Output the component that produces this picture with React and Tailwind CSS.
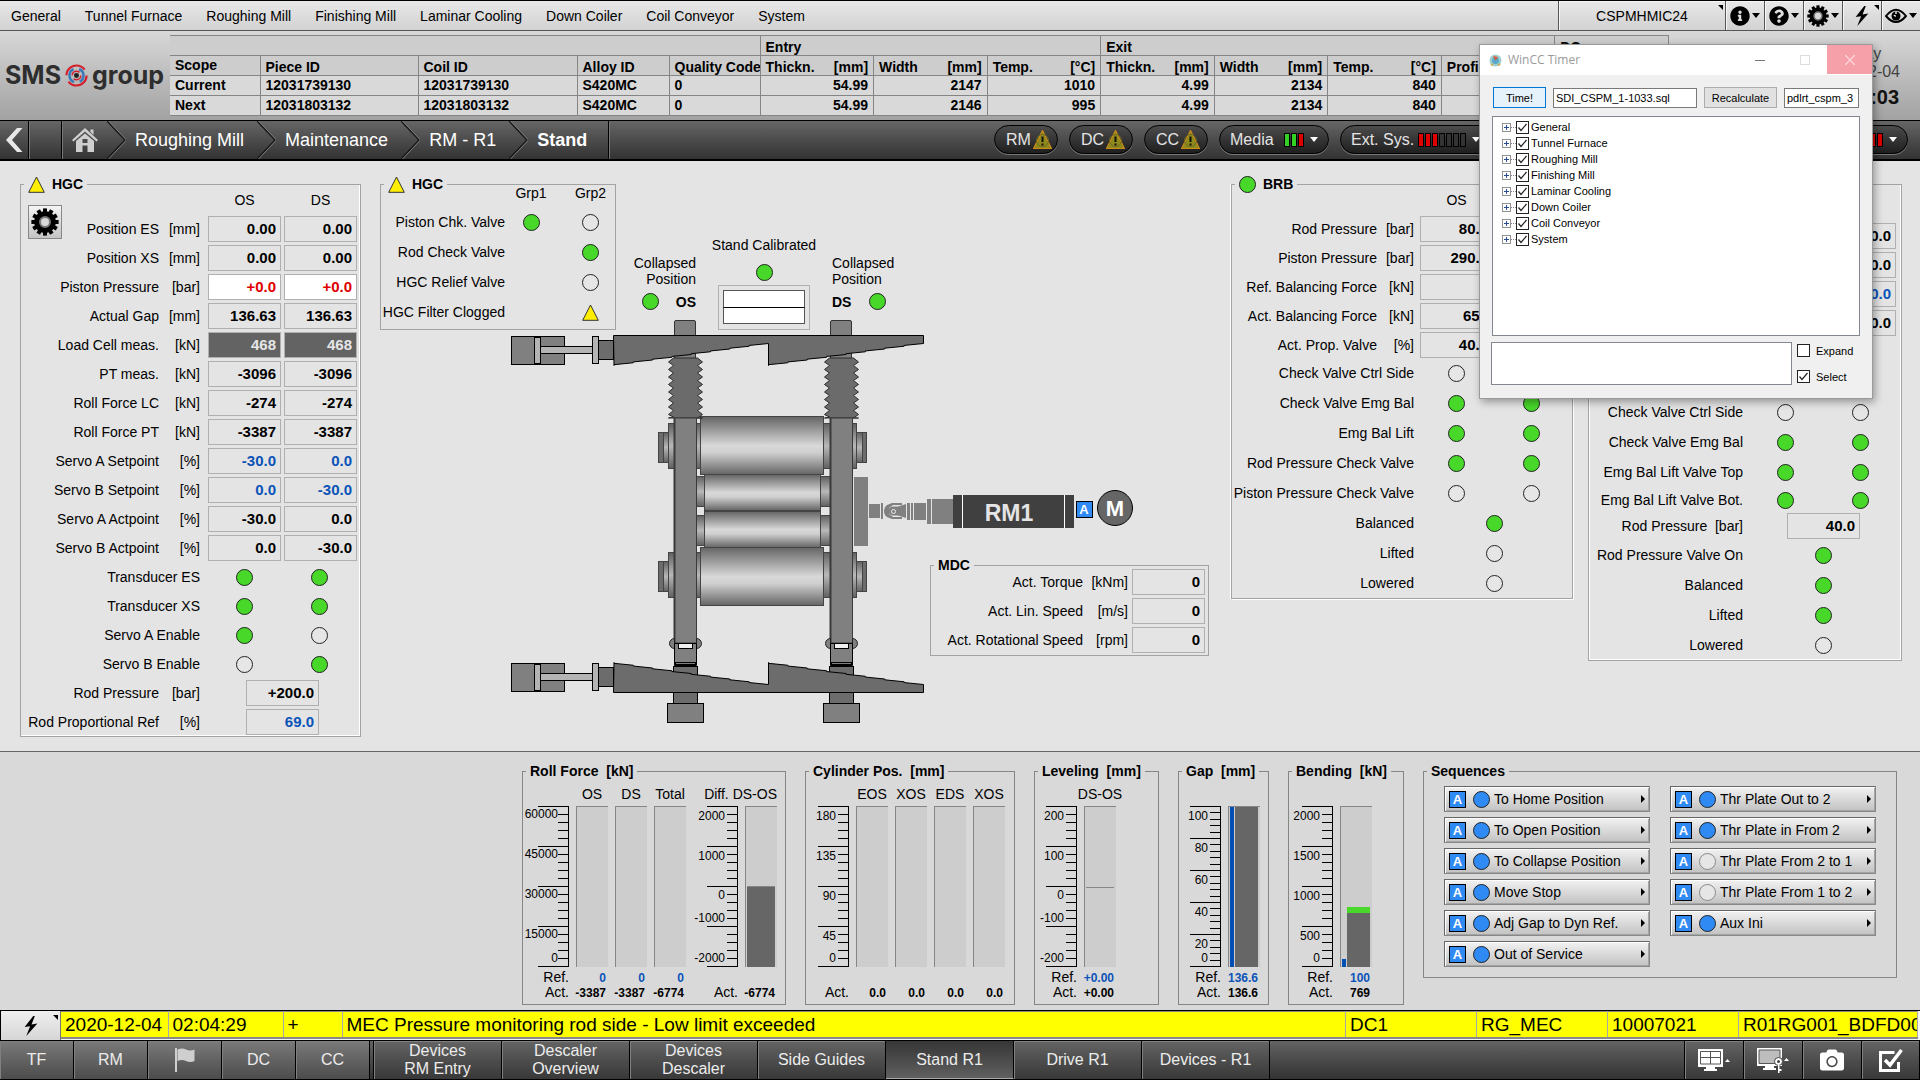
import React from "react";
import { FaInfoCircle, FaQuestionCircle, FaCamera } from "react-icons/fa";

/* ---------- shared bits ---------- */

function Led({ on = false, color = "green" }) {
  const fill = on ? (color === "blue" ? "bg-[#2f8af3]" : "bg-[#48d82a]") : "bg-[#e6e6e6]";
  const edge = !on && color === "blue" ? "border-[#888]" : "border-[#222]";
  return <span className={`inline-block size-[17px] shrink-0 rounded-full border ${edge} ${fill}`} />;
}

function WarnTriangle() {
  return (
    <svg width="17" height="17" viewBox="0 0 17 17" className="shrink-0">
      <path d="M8.5 1 L16.3 16.3 H.7 Z" fill="#ffee00" stroke="#333" strokeWidth="1" />
    </svg>
  );
}

function Bolt({ size = 22 }) {
  return (
    <svg width={size} height={size} viewBox="0 0 22 22">
      <path d="M13.5 0 L4 12.2 L10 11.2 L5.8 22 L18 8.3 L11.6 9.3 L15.2 0 Z" fill="#000" />
    </svg>
  );
}

function Gear({ size, hole }) {
  const teeth = Array.from({ length: 12 }, (_, i) => i * 30);
  return (
    <svg width={size} height={size} viewBox="-14 -14 28 28">
      {teeth.map((a) => (
        <rect key={a} x="-2" y="-13.6" width="4" height="5" fill="#000" transform={`rotate(${a})`} />
      ))}
      <circle r="10.8" fill="#000" />
      <circle r={hole} fill="#d8d8d8" stroke="#777" strokeWidth="2" />
    </svg>
  );
}

function Caret() {
  return <span className="h-0 w-0 border-x-4 border-t-[5px] border-x-transparent border-t-black" />;
}

function AutoBadge() {
  return (
    <span className="flex size-[17px] shrink-0 items-center justify-center border border-black bg-[#2f8af3] text-[13px] leading-none font-bold text-white">
      A
    </span>
  );
}

function Panel({ title, icon, className = "", children, strong = false }) {
  return (
    <fieldset
      className={`relative min-w-0 border ${strong ? "border-[#868686]" : "border-[#a3a3a3]"} ${className}`}
    >
      <legend className="ml-[3px] flex h-5 items-center gap-[7px] px-1 text-sm font-bold whitespace-pre">
        {icon}
        {title}
      </legend>
      {children}
    </fieldset>
  );
}

const tones = {
  normal: "text-black",
  blue: "text-[#0a53b8]",
  red: "bg-white text-[#e00000]",
  dark: "bg-[#636363] text-[#e6e6e6]",
};

function Value({ children, tone = "normal" }) {
  return (
    <output
      className={`flex h-[26px] w-[73px] shrink-0 items-center justify-end border border-[#b0b0b0] pr-1 text-[15px] font-bold ${tones[tone]}`}
    >
      {children}
    </output>
  );
}

/* ---------- top of the page ---------- */

const menu = ["General", "Tunnel Furnace", "Roughing Mill", "Finishing Mill", "Laminar Cooling", "Down Coiler", "Coil Conveyor", "System"];

function Corner() {
  return <span className="absolute top-1 right-0.5 h-0 w-0 border-t-[5px] border-l-[5px] border-t-black border-l-transparent" />;
}

function TopMenu() {
  const cell = "relative flex w-[39px] items-center justify-center gap-0.5 border-l border-[#555] shadow-[inset_1px_1px_0_#f6f6f6]";
  return (
    <header className="flex h-[31px] items-stretch border-t border-b border-t-black border-b-[#555] bg-linear-to-b from-[#e8e8e8] to-[#d2d2d2]">
      <nav className="flex flex-1 items-center gap-6 pl-[11px] text-sm">
        {menu.map((m) => (
          <a href="#" key={m}>{m}</a>
        ))}
      </nav>
      <button className="relative w-[167px] border-l border-[#555] text-center text-sm shadow-[inset_1px_1px_0_#f6f6f6]">
        CSPMHMIC24
        <Corner />
      </button>
      <button aria-label="Information" className={cell}><FaInfoCircle size={20} /><Caret /></button>
      <button aria-label="Help" className={cell}><FaQuestionCircle size={20} /><Caret /></button>
      <button aria-label="Settings" className={cell}><Gear size={22} hole={5} /><Caret /></button>
      <button aria-label="Alarms" className={cell}><Bolt size={20} /><Corner /></button>
      <button aria-label="View" className={cell}>
        <svg width="22" height="16" viewBox="0 0 22 16" fill="none" stroke="#000" strokeWidth="2">
          <path d="M1 8 Q11 -4.500 21 8 Q11 20 1 8 Z" />
          <circle cx="11" cy="8" r="4.500" fill="#000" stroke="none" />
          <path d="M11 6 V3.500 M11 8 A2 2 0 0 1 9 7" stroke="#e8e8e8" strokeWidth="1.500" />
        </svg>
        <Caret />
      </button>
    </header>
  );
}

function Logo() {
  return (
    <div className="flex w-[170px] shrink-0 items-center gap-1 pl-[5px] font-[Inter,sans-serif] text-[25px] font-bold text-[#2e2e2e]">
      SMS
      <svg width="23" height="23" viewBox="0 0 24 24" fill="none">
        <circle cx="12" cy="12" r="10.500" stroke="#d3202c" strokeWidth="2.200" strokeDasharray="26 7" />
        <circle cx="12" cy="12" r="7.300" stroke="#3a78b8" strokeWidth="2.600" strokeDasharray="17 6" strokeDashoffset="9" />
        <circle cx="12" cy="12" r="4.500" stroke="#d3202c" strokeWidth="1.600" strokeDasharray="10 4" />
        <circle cx="12" cy="12" r="2.600" fill="#222" />
      </svg>
      group
    </div>
  );
}

const heads = [
  ["Thickn.", "[mm]"], ["Width", "[mm]"], ["Temp.", "[°C]"],
  ["Thickn.", "[mm]"], ["Width", "[mm]"], ["Temp.", "[°C]"],
  ["Profile", ""], ["", ""],
];
const pieces = [
  ["Current", "12031739130", "12031739130", "S420MC", "0", "54.99", "2147", "1010", "4.99", "2134", "840", "", ""],
  ["Next", "12031803132", "12031803132", "S420MC", "0", "54.99", "2146", "995", "4.99", "2134", "840", "", ""],
];

function PieceTable() {
  const line = "border border-[#858585] px-[5px] py-0 overflow-hidden whitespace-nowrap";
  const head = `${line} align-bottom leading-4`;
  return (
    <table className="mt-1 w-full table-fixed border-collapse text-left text-sm leading-[19px] font-bold">
      <colgroup>
        <col className="w-[90px]" /><col className="w-[158px]" /><col className="w-[159px]" />
        <col className="w-[92px]" /><col className="w-[91px]" />
        {heads.map((_, i) => <col key={i} />)}
      </colgroup>
      <thead className="bg-[#cdcdcd]">
        <tr className="h-5">
          <th colSpan={5} className={`${line} border-l-0`} />
          <th colSpan={3} className={head}>Entry</th>
          <th colSpan={4} className={head}>Exit</th>
          <th className={head}>DC</th>
        </tr>
        <tr className="h-5">
          <th className={`${line} border-l-0`}>Scope</th>
          {["Piece ID", "Coil ID", "Alloy ID", "Quality Code"].map((h) => (
            <th key={h} className={head}>{h}</th>
          ))}
          {heads.map(([a, b], i) => (
            <th key={i} className={head}><span className="flex justify-between"><span>{a}</span><span>{b}</span></span></th>
          ))}
        </tr>
      </thead>
      <tbody className="bg-[#d9d9d9]">
        {pieces.map((r) => (
          <tr key={r[0]} className="h-5">
            {r.map((c, i) => (
              <td key={i} className={`${line} ${i === 0 ? "border-l-0" : ""} ${i > 4 ? "text-right" : ""}`}>{c}</td>
            ))}
          </tr>
        ))}
      </tbody>
    </table>
  );
}

function InfoBand() {
  return (
    <div className="flex h-[89px] items-start bg-linear-to-b from-[#d8d8d8] to-[#a2a2a2]">
      <div className="flex h-full items-center"><Logo /></div>
      <div className="min-w-0 flex-1"><PieceTable /></div>
      <div className="flex w-[251px] shrink-0 justify-end pt-3.5 pr-5">
        <div className="flex flex-col items-center text-base leading-[18px] text-[#444]">
          <span>Friday</span>
          <span>2020-12-04</span>
          <time className="mt-1 text-xl leading-6 font-bold text-[#111]">02:05:03</time>
        </div>
      </div>
    </div>
  );
}

function Chevron() {
  return (
    <svg width="19" height="38" viewBox="0 0 19 38" fill="none" className="shrink-0">
      <path d="M0 0 L18 19 L0 38" stroke="#161616" strokeWidth="1.500" />
      <path d="M1.500 0 L19.500 19 L1.500 38" stroke="#7d7d7d" strokeWidth="1" />
    </svg>
  );
}

const pill = "flex h-[29px] items-center rounded-full border border-black bg-linear-to-b from-[#4c4c4c] to-[#1f1f1f] text-base text-[#e4e4e4] shadow-[0_1px_0_#777]";

function PillWarn({ children }) {
  return (
    <button className={`${pill} w-16 pl-[11px]`}>
      {children}
      <svg width="19" height="19" viewBox="0 0 19 19" className="ml-0.5">
        <path d="M9.500 .500 L18.500 18.500 H.500 Z" fill="#8f8a1c" stroke="#c98a1a" strokeWidth="1.200" />
        <circle cx="9.500" cy="10.500" r="6" fill="none" stroke="#6b6722" strokeWidth="1" />
        <path d="M9.500 6.500 V12 M9.500 13.500 V15.500" stroke="#111" strokeWidth="2" />
      </svg>
    </button>
  );
}

function Lamps({ colors }) {
  const c = { g: "bg-[#35d025]", r: "bg-[#e00000]", n: "bg-[#333]" };
  return (
    <span className="ml-1 flex gap-px">
      {colors.split("").map((k, i) => (
        <span key={i} className={`h-3.5 w-[6px] border border-black ${c[k]}`} />
      ))}
    </span>
  );
}

function WhiteCaret() {
  return <span className="ml-1.5 h-0 w-0 border-x-4 border-t-[5px] border-x-transparent border-t-white" />;
}

function PathBar() {
  return (
    <nav className="flex h-[41px] items-stretch border-t border-b-2 border-black bg-linear-to-b from-[#666] to-[#333] text-lg text-white">
      <button aria-label="Back" className="flex w-[29px] items-center justify-center border-r border-black">
        <svg width="20" height="26" viewBox="0 0 20 26"><path d="M13 1 H18.500 L8 13 L18.500 25 H13 L2 13 Z" fill="#e8e8e8" /></svg>
      </button>
      <span className="w-[33px] border-r border-black shadow-[inset_1px_0_0_#777]" />
      <button aria-label="Home" className="flex w-[45px] items-center justify-center shadow-[inset_1px_0_0_#777]">
        <svg width="26" height="24" viewBox="0 0 26 24">
          <path d="M13 0 L26 12 L24.500 13.500 L13 3.500 L1.500 13.500 L0 12 Z M18.500 1.500 H21.500 V7 L18.500 4 Z M4 13 L13 5.500 L22 13 V24 H15.500 V17.500 H10.500 V24 H4 Z" fill="#cfcfcf" />
          <rect x="10.500" y="11" width="5" height="4" fill="#4a4a4a" />
        </svg>
      </button>
      {["Roughing Mill", "Maintenance", "RM - R1"].map((t) => (
        <React.Fragment key={t}>
          <Chevron />
          <a href="#" className="flex items-center pr-[13px] pl-[9px] whitespace-nowrap">{t}</a>
        </React.Fragment>
      ))}
      <Chevron />
      <a href="#" className="flex items-center border-r border-black pr-[21px] pl-[9px] font-bold">Stand</a>
      <div className="flex flex-1 items-start justify-end gap-[11px] pt-1 pr-3 shadow-[inset_1px_0_0_#777]">
        <PillWarn>RM</PillWarn>
        <PillWarn>DC</PillWarn>
        <PillWarn>CC</PillWarn>
        <button className={`${pill} w-[110px] pl-2.5`}>Media<span className="ml-1.5"><Lamps colors="ggr" /></span><WhiteCaret /></button>
        <button className={`${pill} w-[160px] pl-2.5`}>Ext. Sys.<Lamps colors="rrrnnnn" /><WhiteCaret /></button>
        <button aria-label="Status" className={`${pill} w-[397px] justify-end pr-2.5`}><Lamps colors="rrrr" /><WhiteCaret /></button>
      </div>
    </nav>
  );
}

/* ---------- left HGC panel ---------- */

const hgcRows = [
  ["Position ES", "[mm]", "0.00", "0.00"],
  ["Position XS", "[mm]", "0.00", "0.00"],
  ["Piston Pressure", "[bar]", "+0.0", "+0.0", "red"],
  ["Actual Gap", "[mm]", "136.63", "136.63"],
  ["Load Cell meas.", "[kN]", "468", "468", "dark"],
  ["PT meas.", "[kN]", "-3096", "-3096"],
  ["Roll Force LC", "[kN]", "-274", "-274"],
  ["Roll Force PT", "[kN]", "-3387", "-3387"],
  ["Servo A Setpoint", "[%]", "-30.0", "0.0", "blue"],
  ["Servo B Setpoint", "[%]", "0.0", "-30.0", "blue"],
  ["Servo A Actpoint", "[%]", "-30.0", "0.0"],
  ["Servo B Actpoint", "[%]", "0.0", "-30.0"],
];
const hgcLeds = [
  ["Transducer ES", true, true],
  ["Transducer XS", true, true],
  ["Servo A Enable", true, false],
  ["Servo B Enable", false, true],
];

function SideHeads() {
  return (
    <div className="-mt-0.5 flex h-[21px] justify-end gap-[3px] pr-[3px] text-center leading-4">
      <span className="w-[73px]">OS</span><span className="w-[73px]">DS</span>
    </div>
  );
}

function HgcPanel() {
  const row = "flex h-[26px] items-center pr-[3px]";
  return (
    <Panel title="HGC" icon={<WarnTriangle />} className="w-[341px] shrink-0 self-start pb-px shadow-[inset_-1px_-1px_0_#fff]">
      <div className="flex flex-col gap-[3px]">
        <SideHeads />
        {hgcRows.map(([l, u, a, b, tone]) => (
          <div key={l} className={row}>
            <span className="flex-1 text-right">{l}</span>
            <span className="mr-2 w-[41px] text-right">{u}</span>
            <Value tone={tone}>{a}</Value>
            <span className="w-[3px]" />
            <Value tone={tone}>{b}</Value>
          </div>
        ))}
        {hgcLeds.map(([l, a, b]) => (
          <div key={l} className={row}>
            <span className="mr-2 flex-1 text-right">{l}</span>
            <span className="flex w-[73px] justify-center"><Led on={a} /></span>
            <span className="flex w-[76px] justify-center"><Led on={b} /></span>
          </div>
        ))}
        {[["Rod Pressure", "[bar]", "+200.0"], ["Rod Proportional Ref", "[%]", "69.0", "blue"]].map(([l, u, v, tone]) => (
          <div key={l} className={row}>
            <span className="flex-1 text-right">{l}</span>
            <span className="mr-2 w-[41px] text-right">{u}</span>
            <span className="flex w-[149px] justify-center"><Value tone={tone}>{v}</Value></span>
          </div>
        ))}
      </div>
      <button aria-label="HGC settings" className="absolute top-[11px] left-[7px] flex size-[34px] items-center justify-center border border-[#888] bg-linear-to-b from-[#f4f4f4] to-[#c4c4c4]">
        <Gear size={28} hole={5} />
      </button>
    </Panel>
  );
}

/* ---------- centre ---------- */

const valveRows = [
  ["Piston Chk. Valve", <Led on />, <Led />],
  ["Rod Check Valve", null, <Led on />],
  ["HGC Relief Valve", null, <Led />],
  ["HGC Filter Clogged", null, <WarnTriangle />],
];

function ValvePanel() {
  return (
    <Panel title="HGC" icon={<WarnTriangle />} className="w-[236px] shrink-0 pb-0.5">
      <div className="-mt-[11px] mb-1 flex h-5 items-center justify-end text-center">
        <span className="w-[52px]">Grp1</span><span className="ml-[9px] w-[49px]">Grp2</span>
      </div>
      {valveRows.map(([l, a, b]) => (
        <div key={l} className="flex h-[30px] items-center whitespace-nowrap">
          <span className="w-[124px] shrink-0 text-right">{l}</span>
          <span className="flex w-[52px] shrink-0 justify-center">{a}</span>
          <span className="ml-[9px] flex w-[49px] shrink-0 justify-center">{b}</span>
        </div>
      ))}
    </Panel>
  );
}

function stair(x0, x1, y0, y1) {
  const n = 8;
  const dx = (x1 - x0) / n;
  const dy = (y1 - y0) / n;
  let d = "";
  for (let i = 0; i < n; i++) {
    const x = x0 + dx * (i + 1);
    const y = y0 + dy * (i + 1);
    d += ` L${x} ${y - dy * 0.3} L${x} ${y}`;
  }
  return d;
}

const wedge = `M613.500 335.500 H923.500 V343.500${stair(923.5, 768.5, 343.5, 365.5)} V343.500${stair(768.5, 614, 343.5, 365.5)} Z`;

function Cylinder({ y }) {
  return (
    <g stroke="#000" strokeWidth="1">
      <rect x="511.500" y={y + 0.5} width="53" height="28" fill="#808080" />
      <rect x="540.500" y={y + 10.5} width="52" height="7" fill="#b4b4b4" />
      <rect x="534.500" y={y + 1.5} width="6" height="26" fill="#b4b4b4" />
      <rect x="592.500" y={y + 0.5} width="6" height="27" fill="#b4b4b4" />
      <rect x="598.500" y={y + 4.5} width="15" height="19" fill="#6c6c6c" />
    </g>
  );
}

function Bellows({ x }) {
  let left = "";
  let right = "";
  for (let i = 0; i < 8; i++) {
    const y = 358 + i * 7.5;
    left = ` L${x} ${y + 4} L${x + 5} ${y}` + left;
    right += ` L${x + 34} ${y + 4} L${x + 29} ${y + 7.5}`;
  }
  return <path d={`M${x + 5} 358 H${x + 29}${right} L${x + 34} 418 H${x} L${x + 5} 417${left} Z`} fill="#6b6b6b" stroke="#2c2c2c" />;
}

function Post({ x }) {
  return (
    <g>
      <rect x={x} y="418" width="22" height="225" fill="#808080" stroke="#3a3a3a" />
      <rect x={x - 1} y="418" width="2" height="225" fill="#3a3a3a" />
      <path d={`M${x} 638.500 a5 5 0 0 0 0 10 Z M${x + 22} 638.500 a5 5 0 0 1 0 10 Z`} fill="#808080" stroke="#222" />
      <path d={`M${x} 643.500 H${x + 4} V648.500 H${x + 18} V643.500 H${x + 22} V665.500 H${x} Z`} fill="#808080" stroke="#000" />
      <rect x={x + 4} y="643.500" width="14" height="5" fill="#f0f0f0" stroke="#000" />
      <rect x={x + 1} y="662.500" width="20" height="2" fill="#808080" stroke="#000" />
      <rect x={x - 1} y="666.500" width="24" height="37" fill="#6c6c6c" stroke="#000" />
      <rect x={x - 7} y="703.500" width="36" height="19" fill="#808080" stroke="#000" />
    </g>
  );
}

function BackupNeck({ y }) {
  const s = { fill: "url(#neck)", stroke: "#444" };
  return (
    <g>
      <rect x="658.500" y={y + 9} width="5" height="30" fill="#6c6c6c" stroke="#444" />
      <rect x="663.500" y={y + 9} width="5" height="30" {...s} />
      <rect x="668.500" y={y} width="6" height="45" {...s} />
      <rect x="696.500" y={y} width="4" height="45" {...s} />
      <rect x="823.500" y={y} width="7" height="45" {...s} />
      <rect x="851.500" y={y} width="5" height="45" {...s} />
      <rect x="856.500" y={y + 9} width="6" height="30" {...s} />
      <rect x="862.500" y={y + 9} width="4" height="30" fill="#6c6c6c" stroke="#444" />
    </g>
  );
}

function StandDrawing() {
  const roll = { fill: "url(#roll)", stroke: "#444" };
  return (
    <svg width="342" height="406" viewBox="511 320 342 406" className="shrink-0 overflow-visible" aria-label="Roughing stand R1">
      <defs>
        <linearGradient id="roll" x1="0" y1="0" x2="0" y2="1">
          <stop offset="0" stopColor="#656565" />
          <stop offset=".5" stopColor="#d8d8d8" />
          <stop offset=".62" stopColor="#d0d0d0" />
          <stop offset="1" stopColor="#656565" />
        </linearGradient>
        <linearGradient id="neck" x1="0" y1="0" x2="0" y2="1">
          <stop offset="0" stopColor="#606060" />
          <stop offset=".5" stopColor="#b8b8b8" />
          <stop offset="1" stopColor="#606060" />
        </linearGradient>
      </defs>
      <BackupNeck y={423.5} />
      <BackupNeck y={552.5} />
      {[476.5, 515.5].map((y) => (
        <g key={y}>
          <rect x="696.500" y={y} width="8" height="30" fill="url(#neck)" stroke="#444" />
          <rect x="820.500" y={y} width="10" height="30" fill="url(#neck)" stroke="#444" />
        </g>
      ))}
      <rect x="704.500" y="474.500" width="116" height="36" {...roll} />
      <rect x="704.500" y="511.500" width="116" height="36" {...roll} />
      <rect x="700.500" y="416.500" width="123" height="58" {...roll} />
      <rect x="700.500" y="547.500" width="123" height="58" {...roll} />
      {[674.5, 830.5].map((x) => (
        <g key={x}>
          <rect x={x} y="320.500" width="21" height="40" rx="1.500" fill="#808080" stroke="#333" />
          <Bellows x={x - 6} />
          <Post x={x} />
        </g>
      ))}
      <path d={wedge} fill="#6c6c6c" stroke="#000" />
      <path d={wedge} fill="#6c6c6c" stroke="#000" transform="translate(0 1028) scale(1 -1)" />
      <Cylinder y={336} />
      <Cylinder y={663} />
    </svg>
  );
}

function DriveDrawing() {
  return (
    <svg width="282" height="72" viewBox="853 475 282 72" className="shrink-0" aria-label="Main drive RM1">
      <g fill="#808080">
        <rect x="854" y="477" width="14" height="69" />
        <rect x="869" y="504" width="11" height="14" />
        <rect x="881" y="503" width="2" height="16" />
        <path d="M892 503 H902 V505 H893 L889 508 V514 L893 517 H902 V519 H892 L887 517 Q884 515 884 511 Q884 507 887 505 Z" />
        <path d="M893 506.500 H898 L906 504 V518 L898 515.500 H893 A4.500 4.500 0 0 1 893 506.500 Z" />
        <rect x="907" y="503" width="3" height="17" />
        <rect x="911" y="503" width="2" height="17" />
        <rect x="914" y="503" width="12" height="17" />
        <rect x="927" y="499" width="4" height="25" />
        <rect x="932" y="499" width="22" height="25" />
      </g>
      <circle cx="893.500" cy="511.500" r="2" fill="none" stroke="#eee" />
      <rect x="953" y="495" width="121" height="33" fill="#404040" />
      <path d="M962.500 495 V528 M1064.500 495 V528" stroke="#fff" />
      <text x="1009" y="521" textAnchor="middle" fontSize="23" fontWeight="700" fill="#e4e4e4">RM1</text>
      <rect x="1076.500" y="501.500" width="16" height="16" fill="#2f8af3" stroke="#000" />
      <text x="1084" y="514" textAnchor="middle" fontSize="13" fontWeight="700" fill="#fff">A</text>
      <circle cx="1115" cy="508" r="17.500" fill="#666" stroke="#000" />
      <text x="1115" y="516" textAnchor="middle" fontSize="22" fontWeight="700" fill="#fff">M</text>
    </svg>
  );
}

function MdcPanel() {
  return (
    <Panel title="MDC" className="mt-2 ml-[77px] w-[279px] pb-0.5">
      <div className="-mt-1.5 flex flex-col gap-[3px]">
        {[["Act. Torque", "[kNm]"], ["Act. Lin. Speed", "[m/s]"], ["Act. Rotational Speed", "[rpm]"]].map(([l, u]) => (
          <div key={l} className="flex h-[26px] items-center pr-[3px]">
            <span className="flex-1 text-right whitespace-nowrap">{l}</span>
            <span className="mr-1 w-[45px] text-right">{u}</span>
            <Value>0</Value>
          </div>
        ))}
      </div>
    </Panel>
  );
}

function Centre() {
  return (
    <div className="flex min-w-0 flex-1 flex-col">
      <div className="flex items-start">
        <ValvePanel />
        <div className="ml-4 flex leading-4">
          <div className="w-16 pt-[81px] text-right">
            Collapsed Position
            <div className="mt-1.5 flex items-center justify-between pl-2.5"><Led on /><b>OS</b></div>
          </div>
          <div className="flex w-[136px] flex-col items-center pt-[63px]">
            Stand Calibrated
            <span className="mt-[11px] flex"><Led on /></span>
            <div className="mt-1 h-[45px] w-[92px] border border-[#b0b0b0] p-1">
              <div className="h-[17px] border border-b-0 border-[#555] bg-white" />
              <div className="h-[17px] border border-[#555] border-t-black bg-white" />
            </div>
          </div>
          <div className="w-16 pt-[81px]">
            Collapsed Position
            <div className="mt-1.5 flex items-center justify-between pr-2.5"><b>DS</b><Led on /></div>
          </div>
        </div>
      </div>
      <div className="-mt-2.5 ml-[131px] flex">
        <StandDrawing />
        <div className="flex flex-col pt-[155px]">
          <DriveDrawing />
          <MdcPanel />
        </div>
      </div>
    </div>
  );
}

/* ---------- balancing panels ---------- */

function LedPair({ label, a, b, h = "h-[30px]" }) {
  return (
    <div className={`flex ${h} items-center pr-[3px]`}>
      <span className="mr-1.5 flex-1 text-right whitespace-nowrap">{label}</span>
      {b === undefined ? (
        <span className="flex w-[149px] justify-center"><Led on={a} /></span>
      ) : (
        <>
          <span className="flex w-[73px] justify-center"><Led on={a} /></span>
          <span className="flex w-[76px] justify-center"><Led on={b} /></span>
        </>
      )}
    </div>
  );
}

const brbRows = [
  ["Rod Pressure", "[bar]", "80.0", "80.0"],
  ["Piston Pressure", "[bar]", "290.0", "290.0"],
  ["Ref. Balancing Force", "[kN]", "0", "0", "blue"],
  ["Act. Balancing Force", "[kN]", "658", "658"],
  ["Act. Prop. Valve", "[%]", "40.0", "40.0"],
];

function BrbPanel() {
  return (
    <Panel title="BRB" icon={<Led on />} className="w-[342px] shrink-0 self-start shadow-[1px_1px_0_#fff,-1px_0_0_#fff]">
      <div className="flex flex-col gap-[3px]">
        <SideHeads />
        {brbRows.map(([l, u, a, b, tone]) => (
          <div key={l} className="flex h-[26px] items-center pr-[3px]">
            <span className="flex-1 text-right whitespace-nowrap">{l}</span>
            <span className="mr-1.5 w-[37px] text-right">{u}</span>
            <Value tone={tone}>{a}</Value>
            <span className="w-[3px]" />
            <Value tone={tone}>{b}</Value>
          </div>
        ))}
      </div>
      <LedPair label="Check Valve Ctrl Side" a={false} b={false} />
      <LedPair label="Check Valve Emg Bal" a b />
      <LedPair label="Emg Bal Lift" a b />
      <LedPair label="Rod Pressure Check Valve" a b />
      <LedPair label="Piston Pressure Check Valve" a={false} b={false} />
      <LedPair label="Balanced" a />
      <LedPair label="Lifted" a={false} />
      <LedPair label="Lowered" a={false} />
    </Panel>
  );
}

function RightPanel() {
  return (
    <Panel title="" className="w-[314px] shrink-0 self-start shadow-[inset_1px_-1px_0_#fff,inset_-1px_0_0_#fff]">
      <div className="mb-[61px] flex flex-col items-end gap-[3px] pt-[29px] pr-[5px]">
        {["normal", "normal", "blue", "normal"].map((t, i) => (
          <Value key={i} tone={t}>0.0</Value>
        ))}
      </div>
      <LedPair label="Check Valve Ctrl Side" a={false} b={false} />
      <LedPair label="Check Valve Emg Bal" a b />
      <LedPair label="Emg Bal Lift Valve Top" a b />
      <LedPair label="Emg Bal Lift Valve Bot." a b h="h-[26px]" />
      <div className="mb-px flex h-[26px] items-center pr-[3px]">
        <span className="mr-1.5 flex-1 text-right whitespace-pre">Rod Pressure  [bar]</span>
        <span className="flex w-[149px] justify-center"><Value>40.0</Value></span>
      </div>
      <LedPair label="Rod Pressure Valve On" a />
      <LedPair label="Balanced" a />
      <LedPair label="Lifted" a />
      <LedPair label="Lowered" a={false} />
    </Panel>
  );
}

/* ---------- bar charts ---------- */

function Axis({ w, parts = 4, inset = 12, labels }) {
  const x = w - 1;
  const ticks = [];
  for (let i = 0; i <= parts * 5; i++) {
    const y = Math.round((i * 160) / (parts * 5)) + 0.5;
    ticks.push(`M${x} ${y} h${i % 5 === 0 ? -30 : -10}`);
  }
  return (
    <svg width={w} height="161" viewBox={`0 0 ${w} 161`} className="overflow-visible">
      <path d={`M${x + 0.5} 0 V161 ${ticks.join(" ")}`} stroke="#000" fill="none" />
      {labels.map(([t, y]) => (
        <text key={t} x={x - inset} y={y + 4} textAnchor="end" fontSize="12" fill="#000">{t}</text>
      ))}
    </svg>
  );
}

function AxisCol({ refLabel = true, ...axis }) {
  return (
    <div className="flex flex-col items-end pt-[25px]">
      <Axis {...axis} />
      <span className="mt-[3px] h-[15px] leading-[15px]">{refLabel ? "Ref." : ""}</span>
      <span className="h-[15px] leading-[15px]">Act.</span>
    </div>
  );
}

function BarCol({ head = "", refValue = "", act, children, wide = false }) {
  return (
    <div className="flex w-8 flex-col">
      <span className={`flex h-[25px] items-center whitespace-nowrap ${wide ? "justify-end" : "justify-center"}`}>{head}</span>
      <div className="relative flex h-[161px] items-end gap-px border-t border-l border-[#868686] bg-[#cdcdcd] pr-0.5 pl-px">{children}</div>
      <span className="mt-[3px] flex h-[15px] items-center justify-end pr-0.5 text-xs font-bold text-[#0a53b8]">{refValue}</span>
      <span className="flex h-[15px] items-center justify-end pr-0.5 text-xs font-bold">{act}</span>
    </div>
  );
}

function Charts() {
  const body = "flex gap-[7px] pb-1";
  return (
    <>
      <Panel strong title="Roll Force  [kN]" className="w-[264px] shrink-0">
        <div className={body}>
          <AxisCol w={46} inset={10} labels={[["60000", 8], ["45000", 48], ["30000", 88], ["15000", 128], ["0", 152]]} />
          <BarCol head="OS" refValue="0" act="-3387" />
          <BarCol head="DS" refValue="0" act="-3387" />
          <BarCol head="Total" refValue="0" act="-6774" />
          <AxisCol w={45} refLabel={false} labels={[["2000", 10], ["1000", 50], ["0", 89], ["-1000", 112], ["-2000", 152]]} />
          <BarCol wide head="Diff. DS-OS" act="-6774">
            <div className="h-[81px] flex-1 border-t border-[#868686] bg-[#666]" />
          </BarCol>
        </div>
      </Panel>
      <Panel strong title="Cylinder Pos.  [mm]" className="w-[210px] shrink-0">
        <div className={body}>
          <AxisCol w={43} refLabel={false} labels={[["180", 10], ["135", 50], ["90", 90], ["45", 130], ["0", 152]]} />
          <BarCol head="EOS" act="0.0" />
          <BarCol head="XOS" act="0.0" />
          <BarCol head="EDS" act="0.0" />
          <BarCol head="XOS" act="0.0" />
        </div>
      </Panel>
      <Panel strong title="Leveling  [mm]" className="w-[125px] shrink-0">
        <div className={body}>
          <AxisCol w={42} labels={[["200", 10], ["100", 50], ["0", 89], ["-100", 112], ["-200", 152]]} />
          <BarCol head="DS-OS" refValue="+0.00" act="+0.00">
            <div className="mb-[79px] flex-1 border-t border-[#868686]" />
          </BarCol>
        </div>
      </Panel>
      <Panel strong title="Gap  [mm]" className="w-[91px] shrink-0">
        <div className={body}>
          <AxisCol w={42} parts={5} labels={[["100", 10], ["80", 42], ["60", 74], ["40", 106], ["20", 138], ["0", 152]]} />
          <BarCol refValue="136.6" act="136.6">
            <div className="h-[160px] w-1 bg-[#0050b4]" />
            <div className="h-[160px] flex-1 bg-[#666]" />
          </BarCol>
        </div>
      </Panel>
      <Panel strong title="Bending  [kN]" className="w-[116px] shrink-0">
        <div className={body}>
          <AxisCol w={44} labels={[["2000", 10], ["1500", 50], ["1000", 90], ["500", 130], ["0", 152]]} />
          <BarCol refValue="100" act="769">
            <div className="h-2 w-1 bg-[#0050b4]" />
            <div className="h-[60px] flex-1 border-t-6 border-[#48d82a] bg-[#666]" />
          </BarCol>
        </div>
      </Panel>
    </>
  );
}

const sequences = [
  [["To Home Position", true], ["To Open Position", true], ["To Collapse Position", true], ["Move Stop", true], ["Adj Gap to Dyn Ref.", true], ["Out of Service", true]],
  [["Thr Plate Out to 2", true], ["Thr Plate in From 2", true], ["Thr Plate From 2 to 1", false], ["Thr Plate From 1 to 2", false], ["Aux Ini", true]],
];

function Sequences() {
  return (
    <Panel strong title="Sequences" className="w-[474px] shrink-0 self-start pb-2.5">
      <div className="flex gap-5 px-5 pt-[5px]">
        {sequences.map((col, i) => (
          <div key={i} className="flex flex-1 flex-col gap-[5px]">
            {col.map(([t, on]) => (
              <button
                key={t}
                className="flex h-[26px] items-center border border-t-[#666] border-r-[#888] border-b-[#888] border-l-[#666] bg-linear-to-b from-[#f2f2f2] to-[#c2c2c2] pl-1 shadow-[inset_1px_1px_0_#fff,inset_-1px_-1px_0_#a4a4a4]"
              >
                <AutoBadge />
                <span className="ml-[7px] flex"><Led on={on} color="blue" /></span>
                <span className="ml-1 flex-1 text-left">{t}</span>
                <span className="mr-1 h-0 w-0 border-y-4 border-l-4 border-y-transparent border-l-black" />
              </button>
            ))}
          </div>
        ))}
      </div>
    </Panel>
  );
}

/* ---------- alarm line and bottom bar ---------- */

function AlarmLine() {
  const td = "border-r border-[#a8a8a8] px-1 overflow-hidden";
  return (
    <div className="flex h-[30px] border-t border-black bg-[#f4f4f4] pr-0.5">
      <button aria-label="Alarm list" className="relative flex w-[61px] shrink-0 items-center justify-center border-r border-l border-r-[#777] border-l-black bg-linear-to-b from-[#efefef] to-[#d6d6d6]">
        <Bolt size={20} />
        <Corner />
      </button>
      <table className="h-[28px] w-full table-fixed border-t border-b-2 border-[#888] bg-[#ffff00] text-left text-[19px] leading-6 whitespace-nowrap">
        <colgroup>
          <col className="w-[107px]" /><col className="w-[115px]" /><col className="w-[59px]" /><col />
          <col className="w-[131px]" /><col className="w-[131px]" /><col className="w-[131px]" /><col className="w-[179px]" />
        </colgroup>
        <tbody>
          <tr>
            <td className={td}>2020-12-04</td>
            <td className={td}>02:04:29</td>
            <td className={td}>+</td>
            <td className={td}>MEC Pressure monitoring rod side - Low limit exceeded</td>
            <td className={td}>DC1</td>
            <td className={td}>RG_MEC</td>
            <td className={td}>10007021</td>
            <td className={td}>R01RG001_BDFD001</td>
          </tr>
        </tbody>
      </table>
    </div>
  );
}

function FootButton({ children, w, tone = "dark", label }) {
  const bg = {
    light: "bg-linear-to-b from-[#7a7a7a] to-[#4c4c4c]",
    dark: "bg-linear-to-b from-[#646464] to-[#383838]",
    active: "bg-linear-to-b from-[#363636] to-[#606060] border-b border-b-[#aaa]",
  };
  return (
    <button
      aria-label={label}
      className={`flex ${w} shrink-0 items-center justify-center border-r border-r-black text-center leading-[18px] whitespace-pre-line ${tone === "active" ? "" : "shadow-[inset_1px_1px_0_#808080]"} ${bg[tone]}`}
    >
      {children}
    </button>
  );
}

function BottomBar() {
  return (
    <footer className="flex h-10 items-stretch border-t border-b border-black bg-linear-to-b from-[#636363] to-[#333] text-base text-[#ececec]">
      <FootButton w="w-[74px]" tone="light">TF</FootButton>
      <FootButton w="w-[74px]" tone="light">RM</FootButton>
      <FootButton w="w-[74px]" tone="light" label="Flag">
        <svg width="22" height="24" viewBox="0 0 22 24">
          <path d="M1 0 H3 V24 H1 Z M3.500 1.500 Q8 -.500 12 1.500 Q16 3.500 20.500 1.500 V13 Q16 15 12 13 Q8 11 3.500 13 Z" fill="#cfcfcf" />
        </svg>
      </FootButton>
      <FootButton w="w-[74px]" tone="light">DC</FootButton>
      <FootButton w="w-[74px]" tone="light">CC</FootButton>
      <span className="w-1 border-r border-black" />
      <FootButton w="w-32">{"Devices\nRM Entry"}</FootButton>
      <FootButton w="w-32">{"Descaler\nOverview"}</FootButton>
      <FootButton w="w-32">{"Devices\nDescaler"}</FootButton>
      <FootButton w="w-32">Side Guides</FootButton>
      <FootButton w="w-32" tone="active">Stand R1</FootButton>
      <FootButton w="w-32">Drive R1</FootButton>
      <FootButton w="w-32">Devices - R1</FootButton>
      <span className="flex-1 border-r border-black" />
      <FootButton w="w-[59px]" label="Screens">
        <svg width="32" height="23" viewBox="0 0 32 23">
          <path d="M0 0 H25 V18 H17 V20 H19 V22 H6 V20 H8 V18 H0 Z" fill="#fff" />
          <path d="M2.500 2.500 H22.500 V15 H2.500 Z M12.500 2.500 V15 M2.500 8.500 H22.500" fill="none" stroke="#555" />
          <path d="M27 13 L29.500 10 L32 13 Z" fill="#fff" />
        </svg>
      </FootButton>
      <FootButton w="w-[59px]" label="Screen access">
        <svg width="32" height="25" viewBox="0 0 32 25">
          <path d="M0 0 H25 V18 H17 V20 H19 V22 H6 V20 H8 V18 H0 Z" fill="#fff" />
          <path d="M2 2 H23 V15.500 H2 Z" fill="#bdbdbd" stroke="#555" />
          <circle cx="21.500" cy="13.500" r="4" fill="#fff" stroke="#444" />
          <circle cx="21.500" cy="13.500" r="1.500" fill="#444" />
          <path d="M21 17 H22.500 V25 H21 Z M22.500 21 H24.500 V23 H22.500 Z" fill="#fff" />
          <path d="M27 13 L29.500 10 L32 13 Z" fill="#fff" />
        </svg>
      </FootButton>
      <FootButton w="w-[59px]" label="Screenshot"><FaCamera size={24} color="#fff" /></FootButton>
      <FootButton w="w-[58px]" label="Acknowledge">
        <svg width="24" height="25" viewBox="0 0 24 25" fill="none" stroke="#fff">
          <path d="M15.500 4.500 H1.500 V22.500 H19.500 V14" strokeWidth="3" />
          <path d="M6 12 L11 17 L22.500 2" strokeWidth="3.500" />
        </svg>
      </FootButton>
    </footer>
  );
}

/* ---------- timer window ---------- */

function Check({ label, checked }) {
  return (
    <label className="flex items-center">
      <span className="grid size-[13px] shrink-0">
        <input type="checkbox" defaultChecked={checked} className="peer col-start-1 row-start-1 size-[13px] appearance-none border border-[#222] bg-white" />
        <svg viewBox="0 0 13 13" className="pointer-events-none invisible col-start-1 row-start-1 size-[13px] peer-checked:visible">
          <path d="M2.500 6.500 L5 9.500 L10.500 3" fill="none" stroke="#222" strokeWidth="1.200" />
        </svg>
      </span>
      {label}
    </label>
  );
}

function TimerWindow() {
  const box = "h-5 border border-[#7a7a7a] bg-white px-0.5";
  return (
    <section className="absolute top-11 right-[47px] flex w-[394px] flex-col border border-[#9a9a9a] bg-[#f0f0f0] text-[11px] leading-3 text-black shadow-[2px_3px_8px_rgba(0,0,0,0.35)]">
      <div className="flex h-[30px] items-stretch bg-white pl-[9px]">
        <span className="flex flex-1 items-center gap-1.5 font-['Open_Sans',sans-serif] text-xs text-[#9a9a9a]">
          <svg width="13" height="13" viewBox="0 0 13 13">
            <circle cx="6.500" cy="6.500" r="6" fill="#9fd0cf" />
            <circle cx="6.500" cy="6.500" r="3.500" fill="#5aa9c9" />
            <path d="M6.500 6.500 L4 2 L9 3 Z" fill="#e2553c" />
            <path d="M1 10 L3.500 12.500 L4.500 9.500 Z M12 10 L9.500 12.500 L8.500 9.500 Z" fill="#c9b25a" />
          </svg>
          WinCC Timer
        </span>
        <button aria-label="Minimize" className="flex w-[45px] items-center justify-center"><span className="h-px w-2.5 bg-[#777]" /></button>
        <button aria-label="Maximize" className="flex w-[45px] items-center justify-center"><span className="size-2.5 border border-[#ddd]" /></button>
        <button aria-label="Close" className="mb-px flex w-[45px] items-center justify-center bg-[#f6a1a9]">
          <svg width="10" height="10" viewBox="0 0 10 10"><path d="M0 0 L10 10 M10 0 L0 10" stroke="#fbdcdf" strokeWidth="1.200" /></svg>
        </button>
      </div>
      <div className="flex items-center gap-[7px] pt-3 pr-3 pl-[13px]">
        <button className="h-[21px] w-[53px] border border-[#0078d7] bg-[#e5f1fb]">Time!</button>
        <input aria-label="SQL file" defaultValue="SDI_CSPM_1-1033.sql" className={`${box} w-[144px]`} />
        <button className="h-[21px] w-[73px] border border-[#adadad] bg-[#e1e1e1]">Recalculate</button>
        <input aria-label="Database" defaultValue="pdlrt_cspm_3" className={`${box} w-[75px]`} />
      </div>
      <ul className="mx-3 mt-2 h-[220px] border border-[#828790] bg-white pt-0.5 pl-[9px]">
        {menu.map((m) => (
          <li key={m} className="flex h-4 items-center">
            <button aria-label={`Expand ${m}`} className="flex size-[9px] items-center justify-center border border-[#919191] bg-white">
              <svg width="7" height="7" viewBox="0 0 7 7"><path d="M1 3.500 H6 M3.500 1 V6" stroke="#2b4b9b" /></svg>
            </button>
            <span className="w-[5px] border-b border-dotted border-[#888]" />
            <Check checked label={<span className="ml-0.5">{m}</span>} />
          </li>
        ))}
      </ul>
      <div className="flex gap-[5px] pt-1.5 pb-[13px] pl-[11px]">
        <textarea aria-label="Output" className="h-[43px] w-[301px] resize-none border border-[#828790] bg-white" />
        <div className="flex flex-col gap-[13px] pt-0.5">
          <Check label={<span className="ml-1.5">Expand</span>} />
          <Check checked label={<span className="ml-1.5">Select</span>} />
        </div>
      </div>
    </section>
  );
}

export default function App() {
  return (
    <div className="relative flex min-h-screen flex-col overflow-hidden bg-[#e4e4e4] font-['Liberation_Sans',Arial,sans-serif] text-sm text-black">
      <TopMenu />
      <InfoBand />
      <PathBar />
      <main className="flex flex-1 flex-col">
        <section className="flex flex-1 items-start pt-[13px] pr-[18px] pl-5">
          <HgcPanel />
          <div className="ml-[19px] flex min-w-0 flex-1"><Centre /></div>
          <BrbPanel />
          <div className="ml-[15px] shrink-0"><RightPanel /></div>
        </section>
        <section className="flex justify-end gap-[19px] border-t border-[#666] bg-[#d9d9d9] pt-[9px] pr-[23px] pb-[5px]">
          <Charts />
          <Sequences />
        </section>
      </main>
      <AlarmLine />
      <BottomBar />
      <TimerWindow />
    </div>
  );
}
